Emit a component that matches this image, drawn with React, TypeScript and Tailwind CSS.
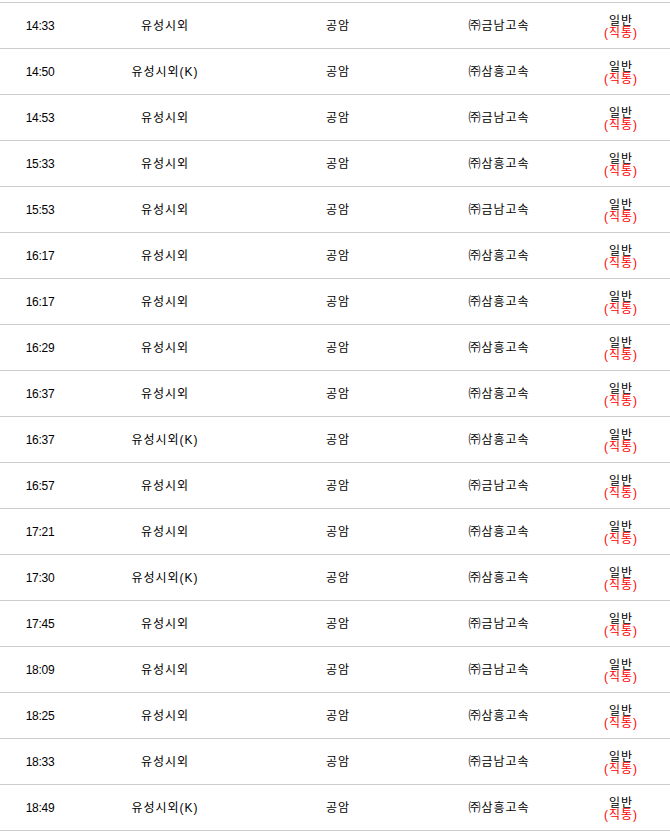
const rows = [
  ["14:33", "유성시외", "㈜금남고속"],
  ["14:50", "유성시외(K)", "㈜삼흥고속"],
  ["14:53", "유성시외", "㈜금남고속"],
  ["15:33", "유성시외", "㈜삼흥고속"],
  ["15:53", "유성시외", "㈜금남고속"],
  ["16:17", "유성시외", "㈜삼흥고속"],
  ["16:17", "유성시외", "㈜삼흥고속"],
  ["16:29", "유성시외", "㈜삼흥고속"],
  ["16:37", "유성시외", "㈜삼흥고속"],
  ["16:37", "유성시외(K)", "㈜삼흥고속"],
  ["16:57", "유성시외", "㈜금남고속"],
  ["17:21", "유성시외", "㈜삼흥고속"],
  ["17:30", "유성시외(K)", "㈜삼흥고속"],
  ["17:45", "유성시외", "㈜금남고속"],
  ["18:09", "유성시외", "㈜금남고속"],
  ["18:25", "유성시외", "㈜삼흥고속"],
  ["18:33", "유성시외", "㈜금남고속"],
  ["18:49", "유성시외(K)", "㈜삼흥고속"],
];

export default function App() {
  return (
    <div className="w-[670px] bg-white pt-[2px] text-[12px] text-black font-['Liberation_Sans','Noto_Sans_CJK_KR',sans-serif]">
      <div className="border-t border-[#cccccc]">
        {rows.map(([time, from, company], idx) => (
          <div
            key={idx}
            className="grid h-[46px] grid-cols-[80px_170px_176px_146px_98px] items-center border-b border-[#cccccc] text-center"
          >
            <div className="tracking-[-0.3px]">{time}</div>
            <div className="tracking-[1px]">{from}</div>
            <div className="tracking-[1px]">공암</div>
            <div className="tracking-[1px]">{company}</div>
            <div className="flex flex-col items-center pt-[3px] leading-[12.5px] tracking-[1px]">
              <span>일반</span>
              <span className="text-[#ff0000]">(직통)</span>
            </div>
          </div>
        ))}
      </div>
    </div>
  );
}
